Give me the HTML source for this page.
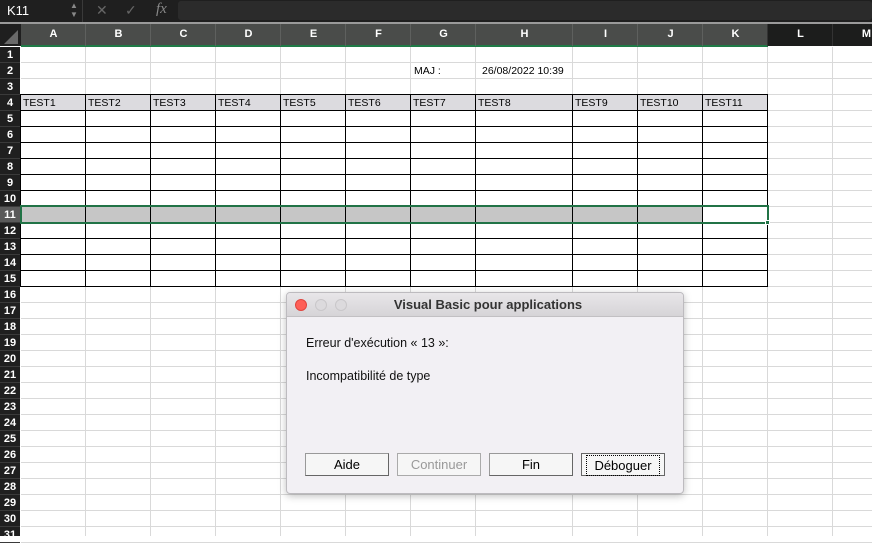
<!DOCTYPE html>
<html><head><meta charset="utf-8"><style>
*{margin:0;padding:0;box-sizing:border-box}
body{width:872px;height:536px;overflow:hidden;background:#fff;position:relative;font-family:"Liberation Sans",sans-serif}
.a{position:absolute}
.t{font-size:10.5px;color:#000;white-space:nowrap}
</style></head><body>
<div class="a" style="left:0;top:0;width:872px;height:22px;background:#1f1f1f"></div>
<div class="a" style="left:0;top:22px;width:872px;height:2px;background:#9a9a9a"></div>
<div class="a" style="left:7px;top:3px;color:#fff;font-size:13px">K11</div>
<div class="a" style="left:70px;top:1px;color:#888;font-size:8px;line-height:9px">▲<br>▼</div>
<div class="a" style="left:82px;top:0;width:1px;height:22px;background:#3a3a3a"></div>
<div class="a" style="left:96px;top:2px;color:#666;font-size:14px">✕</div>
<div class="a" style="left:125px;top:2px;color:#666;font-size:14px">✓</div>
<div class="a" style="left:156px;top:1px;color:#888;font-size:15px;font-style:italic;font-family:'Liberation Serif',serif">fx</div>
<div class="a" style="left:178px;top:1px;width:694px;height:19px;background:#2b2b2b;border-radius:3px"></div>
<div id="g"></div>
<script>
var cols=[21,86,151,216,281,346,411,476,573,638,703,768,833,900];
var names="ABCDEFGHIJKLM";
var h='';
h+='<div class="a" style="left:0;top:24px;width:21px;height:22px;background:#1f1f1f"></div>';
h+='<div class="a" style="left:4px;top:30px;width:0;height:0;border-left:14px solid transparent;border-bottom:14px solid #6a6a6a"></div>';
h+='<div class="a" style="left:21px;top:24px;width:747px;height:22px;background:#4a4c4a"></div>';
h+='<div class="a" style="left:768px;top:24px;width:104px;height:22px;background:#1c1d1c"></div>';
h+='<div class="a" style="left:21px;top:45px;width:747px;height:2px;background:#1f7a46"></div>';
for(var i=0;i<13;i++){var w=cols[i+1]-cols[i];
h+='<div class="a" style="left:'+cols[i]+'px;top:28px;width:'+w+'px;text-align:center;color:#fff;font-size:11px;font-weight:bold">'+names[i]+'</div>';
h+='<div class="a" style="left:'+(cols[i+1]-1)+'px;top:24px;width:1px;height:22px;background:'+(i<10?'#5e605e':'#333')+'"></div>';
h+='<div class="a" style="left:'+(cols[i+1]-1)+'px;top:47px;width:1px;height:489px;background:#d9d9d9"></div>';}
h+='<div class="a" style="left:0;top:47px;width:20px;height:489px;background:#1f1f1f"></div>';
for(var r=1;r<=31;r++){var y=47+(r-1)*16;
h+='<div class="a" style="left:21px;top:'+(y+15)+'px;width:851px;height:1px;background:#d9d9d9"></div>';
h+='<div class="a" style="left:0;top:'+y+'px;width:20px;height:16px;'+(r==11?'background:#5a5a5a;':'')+'color:#fff;font-size:11px;font-weight:bold;text-align:center;line-height:16px;border-bottom:1px solid #3a3a3a">'+r+'</div>';}
h+='<div class="a" style="left:21px;top:95px;width:747px;height:16px;background:#dcdbdf"></div>';
h+='<div class="a" style="left:21px;top:207px;width:682px;height:16px;background:#c6c6c6"></div>';
for(var r=4;r<=16;r++){var y=47+(r-1)*16-1;
h+='<div class="a" style="left:20px;top:'+y+'px;width:748px;height:1px;background:#000"></div>';}
for(var i=0;i<12;i++){h+='<div class="a" style="left:'+(cols[i]-1)+'px;top:94px;width:1px;height:193px;background:#000"></div>';}
var tn=['TEST1','TEST2','TEST3','TEST4','TEST5','TEST6','TEST7','TEST8','TEST9','TEST10','TEST11'];
for(var i=0;i<11;i++)h+='<div class="a t" style="left:'+(cols[i]+2)+'px;top:97px">'+tn[i]+'</div>';
h+='<div class="a t" style="left:414px;top:65px">MAJ :</div><div class="a t" style="left:482px;top:65px">26/08/2022 10:39</div>';
h+='<div class="a" style="left:20px;top:205px;width:749px;height:19px;border:2px solid #217346"></div>';
h+='<div class="a" style="left:765px;top:220px;width:5px;height:5px;background:#217346;border:1px solid #fff"></div>';
document.getElementById('g').innerHTML=h;
</script>
<div class="a" style="left:286px;top:292px;width:398px;height:202px;background:#f2f0f4;border:1px solid #bdbbbf;box-shadow:0 2px 8px rgba(0,0,0,.25);border-radius:4px">
 <div style="height:24px;background:linear-gradient(#e8e6e9,#d6d4d7);border-bottom:1px solid #c2c0c3;border-radius:4px 4px 0 0;position:relative">
  <div class="a" style="left:8px;top:6px;width:12px;height:12px;border-radius:6px;background:#fe5f57;border:1px solid #e0443e"></div>
  <div class="a" style="left:28px;top:6px;width:12px;height:12px;border-radius:6px;background:#dcdadd;border:1px solid #c9c7ca"></div>
  <div class="a" style="left:48px;top:6px;width:12px;height:12px;border-radius:6px;background:#dcdadd;border:1px solid #c9c7ca"></div>
  <div style="text-align:center;font-size:13px;font-weight:bold;color:#333;line-height:24px;padding-left:6px">Visual Basic pour applications</div>
 </div>
 <div class="a" style="left:19px;top:43px;font-size:12.5px;color:#111">Erreur d'exécution « 13 »:</div>
 <div class="a" style="left:19px;top:76px;font-size:12.5px;color:#111">Incompatibilité de type</div>
 <div class="a" style="left:18px;top:160px;width:84px;height:23px;background:#f6f6f6;border:1px solid #999;border-right-color:#666;border-bottom-color:#666;text-align:center;font-size:13px;line-height:21px">Aide</div>
 <div class="a" style="left:110px;top:160px;width:84px;height:23px;background:#f6f6f6;border:1px solid #aaa;text-align:center;font-size:13px;line-height:21px;color:#999">Continuer</div>
 <div class="a" style="left:202px;top:160px;width:84px;height:23px;background:#f6f6f6;border:1px solid #999;border-right-color:#666;border-bottom-color:#666;text-align:center;font-size:13px;line-height:21px">Fin</div>
 <div class="a" style="left:294px;top:160px;width:84px;height:23px;background:#f6f6f6;border:1px solid #666;text-align:center;font-size:13px;line-height:19px"><span style="display:inline-block;border:1px dotted #000;margin-top:1px;padding:0 3px;width:74px">Déboguer</span></div>
</div>
</body></html>
